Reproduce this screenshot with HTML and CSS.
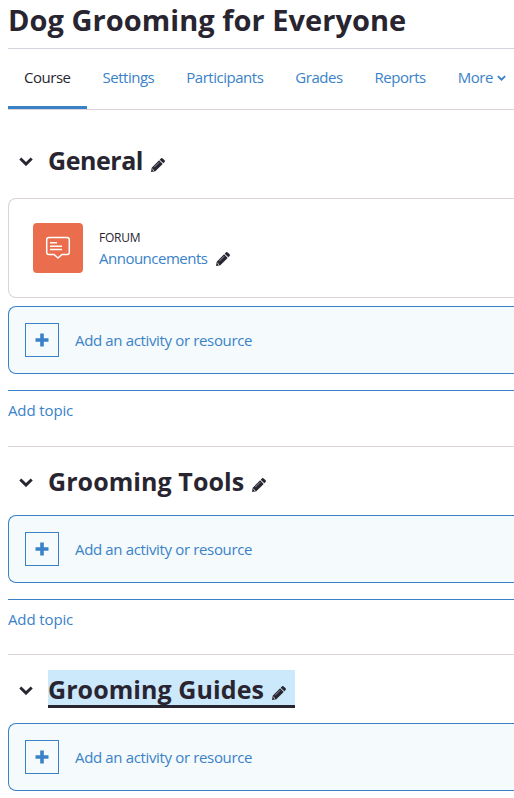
FILE: index.html
```html
<!DOCTYPE html>
<html lang="en">
<head>
<meta charset="utf-8">
<title>Dog Grooming for Everyone</title>
<link rel="stylesheet" href="styles.css">
</head>
<body>
<svg class="symbols" aria-hidden="true">
  <symbol id="chevron" viewBox="0 0 14 9"><path d="M1.3 1.500 7 7.100l5.700-5.600" fill="none" stroke="currentColor" stroke-width="2.900"/></symbol>
  <symbol id="pencil" viewBox="0 0 14 14"><path d="M0 14l.7-4.300L8.100 2.300l3.600 3.600-7.400 7.400zM8.700 1.700 10.100.3q.8-.6 1.600.1l1.900 1.900q.7.8 0 1.600L12.300 5.300z" fill="currentColor"/><path d="M3.200 9.200 8.200 4.200" stroke="#b9cbd6" stroke-width=".7"/><path d="M1.300 11l1.700 1.700" stroke="#fff" stroke-width=".9"/></symbol>
  <symbol id="plus" viewBox="0 0 14 14"><path d="M7 .5v13M.5 7h13" fill="none" stroke="currentColor" stroke-width="3.600"/></symbol>
</svg>
<main class="page">
  <h1 class="title">Dog Grooming for Everyone</h1>
  <nav class="tabs">
    <a class="tab active">Course</a>
    <a class="tab">Settings</a>
    <a class="tab">Participants</a>
    <a class="tab">Grades</a>
    <a class="tab">Reports</a>
    <a class="tab">More<svg class="caret"><use href="#chevron"/></svg></a>
  </nav>

  <section class="topic general">
    <header class="heading">
      <svg class="chevron"><use href="#chevron"/></svg>
      <h2 class="name"><span class="label">General</span><svg class="pencil"><use href="#pencil"/></svg></h2>
    </header>
    <article class="activity">
      <div class="forum-icon">
        <svg viewBox="0 0 26 26" width="26" height="26" fill="none" stroke="#fff" stroke-width="1.500" stroke-linejoin="round"><path d="M4 2.500h18q2.300 0 2.300 2.300v12.400q0 2.300-2.300 2.300h-5L13 23l-4-3.500H4q-2.300 0-2.300-2.300V4.800Q1.700 2.500 4 2.500z"/><path d="M5 7.700h7M5 11.300h12M5 14.500h12"/></svg>
      </div>
      <div class="activity-text">
        <span class="kind">FORUM</span>
        <span class="activity-name"><a>Announcements</a><svg class="pencil"><use href="#pencil"/></svg></span>
      </div>
    </article>
    <div class="add-activity"><span class="plus"><svg><use href="#plus"/></svg></span><a>Add an activity or resource</a></div>
    <div class="add-topic"><a>Add topic</a></div>
  </section>

  <section class="topic">
    <header class="heading">
      <svg class="chevron"><use href="#chevron"/></svg>
      <h2 class="name"><span class="label long">Grooming Tools</span><svg class="pencil"><use href="#pencil"/></svg></h2>
    </header>
    <div class="add-activity"><span class="plus"><svg><use href="#plus"/></svg></span><a>Add an activity or resource</a></div>
    <div class="add-topic compact"><a>Add topic</a></div>
  </section>

  <section class="topic">
    <header class="heading">
      <svg class="chevron"><use href="#chevron"/></svg>
      <h2 class="name selected"><span class="label long">Grooming Guides</span><svg class="pencil"><use href="#pencil"/></svg></h2>
    </header>
    <div class="add-activity"><span class="plus"><svg><use href="#plus"/></svg></span><a>Add an activity or resource</a></div>
  </section>
</main>
</body>
</html>
```
FILE: styles.css
```css
* { box-sizing: border-box; }
body {
  margin: 0;
  background: #fff;
  color: #282531;
  font: 15px/22px "Open Sans", "Noto Sans", sans-serif;
  overflow: hidden;
}
svg { display: block; flex: none; }
a { color: #3a82c8; letter-spacing: -.35px; white-space: nowrap; }
.symbols { display: none; }
.page { height: 798px; padding-left: 8px; overflow: hidden; }

.title {
  height: 49px;
  margin: 0;
  border-bottom: 1px solid #d5d1df;
  font-size: 29px;
  line-height: 40px;
  letter-spacing: .04px;
  white-space: nowrap;
}

.tabs { display: flex; height: 61px; border-bottom: 1px solid #dcd2d8; }
.tab { display: flex; align-items: center; height: 60px; padding: 0 16px 2px; border-bottom: 3px solid transparent; letter-spacing: -.48px; }
.tab.active { color: #282531; border-color: #3a82c8; }
.caret { width: 9px; height: 6px; margin: 3px 0 0 4px; }

.topic { border-top: 1px solid #dcd2d8; }
.topic.general { margin-top: 16px; border-top: 0; }
.heading { display: flex; align-items: center; height: 68px; padding-left: 11px; }
.general .heading { height: 72px; padding-bottom: 2px; }
.chevron { width: 14px; height: 9px; margin: 3px 15px 0 0; }
.general .chevron { margin-top: 1px; }
.name {
  display: flex;
  align-items: center;
  height: 38px;
  margin: 0;
  padding-right: 9px;
  border-bottom: 3px solid transparent;
  font-size: 25px;
  line-height: 35px;
  white-space: nowrap;
}
.label { padding-top: 4px; letter-spacing: -.45px; }
.general .label { padding-top: 2px; }
.label.long { letter-spacing: .08px; }
.pencil { width: 14px; height: 14px; margin-left: 8px; }
.name .pencil { margin-top: 10px; }
.selected { background: #cce8fb; border-color: #282531; }

.activity {
  display: flex;
  align-items: center;
  height: 100px;
  margin-bottom: 8px;
  padding-left: 24px;
  border: 1px solid #dcd2d8;
  border-right: 0;
  border-radius: 8px 0 0 8px;
}
.activity a { letter-spacing: -.5px; }
.activity .pencil { margin: 2px 0 0 9px; }
.forum-icon { display: flex; align-items: center; justify-content: center; width: 50px; height: 50px; margin-right: 16px; border-radius: 4px; background: #ea6e4e; }
.activity-text { display: flex; flex-direction: column; }
.kind { padding-top: 1px; font-size: 12px; line-height: 18px; letter-spacing: -.25px; }
.activity-name { display: flex; align-items: center; }

.add-activity {
  display: flex;
  align-items: center;
  height: 68px;
  padding-left: 16px;
  border: 1px solid #3a82c8;
  border-right: 0;
  border-radius: 8px 0 0 8px;
  background: #f5fafd;
}
.plus { display: flex; align-items: center; justify-content: center; width: 34px; height: 34px; margin-right: 16px; border: 1px solid #3a82c8; color: #3a82c8; }
.plus svg { width: 14px; height: 14px; }
.add-topic { height: 56px; margin-top: 16px; padding-top: 8px; border-top: 1px solid #3a82c8; }
.add-topic.compact { height: 55px; }
.add-topic a { letter-spacing: -.12px; }
```
